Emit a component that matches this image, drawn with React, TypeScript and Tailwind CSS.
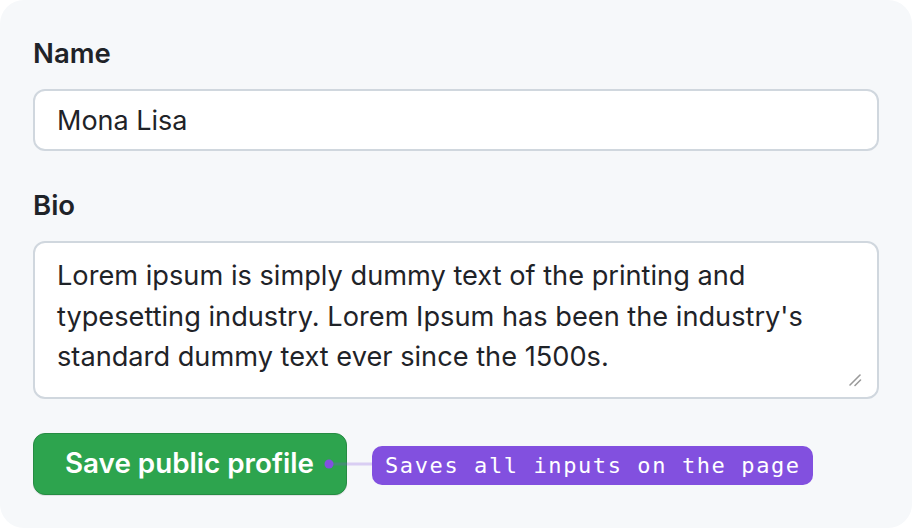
import React from "react";

export default function App() {
  const text =
    "Lorem ipsum is simply dummy text of the printing and typesetting industry. Lorem Ipsum has been the industry's standard dummy text ever since the 1500s.";
  return (
    <div className="w-[912px] h-[528px] bg-white" style={{ fontFamily: "Inter, 'Noto Sans', sans-serif" }}>
      <div className="w-full h-full rounded-[24px] bg-[#f6f8fa] px-[33px] pt-[37px] pb-[33px] flex flex-col text-[#1f2328]">
        <label className="text-[27.5px] leading-[32px] font-semibold">Name</label>
        <input
          readOnly
          defaultValue="Mona Lisa"
          className="mt-[20px] h-[62px] w-full rounded-[12px] border-2 border-[#d0d7de] bg-white px-[22px] text-[27px] text-[#1f2328] outline-none"
        />
        <label className="mt-[38px] text-[27.5px] leading-[32px] font-semibold">Bio</label>
        <div className="relative mt-[20px]">
          <textarea
            readOnly
            defaultValue={text}
            className="block h-[158px] w-full resize-none rounded-[12px] border-2 border-[#d0d7de] bg-white px-[22px] pt-[13px] text-[27.2px] leading-[40.5px] text-[#1f2328] outline-none"
          />
          <svg className="absolute right-[17px] bottom-[12px]" width="14" height="14" viewBox="0 0 14 14">
            <line x1="2" y1="12" x2="12" y2="2" stroke="#9a9a9a" strokeWidth="1.6" strokeLinecap="round" />
            <line x1="7" y1="12.5" x2="12.5" y2="7" stroke="#9a9a9a" strokeWidth="1.6" strokeLinecap="round" />
          </svg>
        </div>
        <div className="mt-[34px] relative flex">
          <button className="h-[62px] rounded-[12px] border border-[#268c43] bg-[#2da44e] pl-[31px] pr-[32px] text-[27.8px] font-semibold text-white shadow-[0_1px_0_rgba(31,35,40,0.1)]">
            Save public profile
          </button>
          <div className="absolute left-[296px] top-[31px] h-[3px] w-[44px] -translate-y-1/2 bg-[rgba(130,80,223,0.25)]" />
          <div className="absolute left-[296px] top-[31px] h-[9px] w-[9px] -translate-x-1/2 -translate-y-1/2 rounded-full bg-[#8250df]" />
          <div
            className="absolute left-[339px] top-[13px] flex h-[39px] items-center rounded-[10px] bg-[#8250df] pl-[13px] pr-[12px] text-[22px] tracking-[1.6px] text-white whitespace-nowrap"
            style={{ fontFamily: "'DejaVu Sans Mono', monospace" }}
          >
            Saves all inputs on the page
          </div>
        </div>
      </div>
    </div>
  );
}
